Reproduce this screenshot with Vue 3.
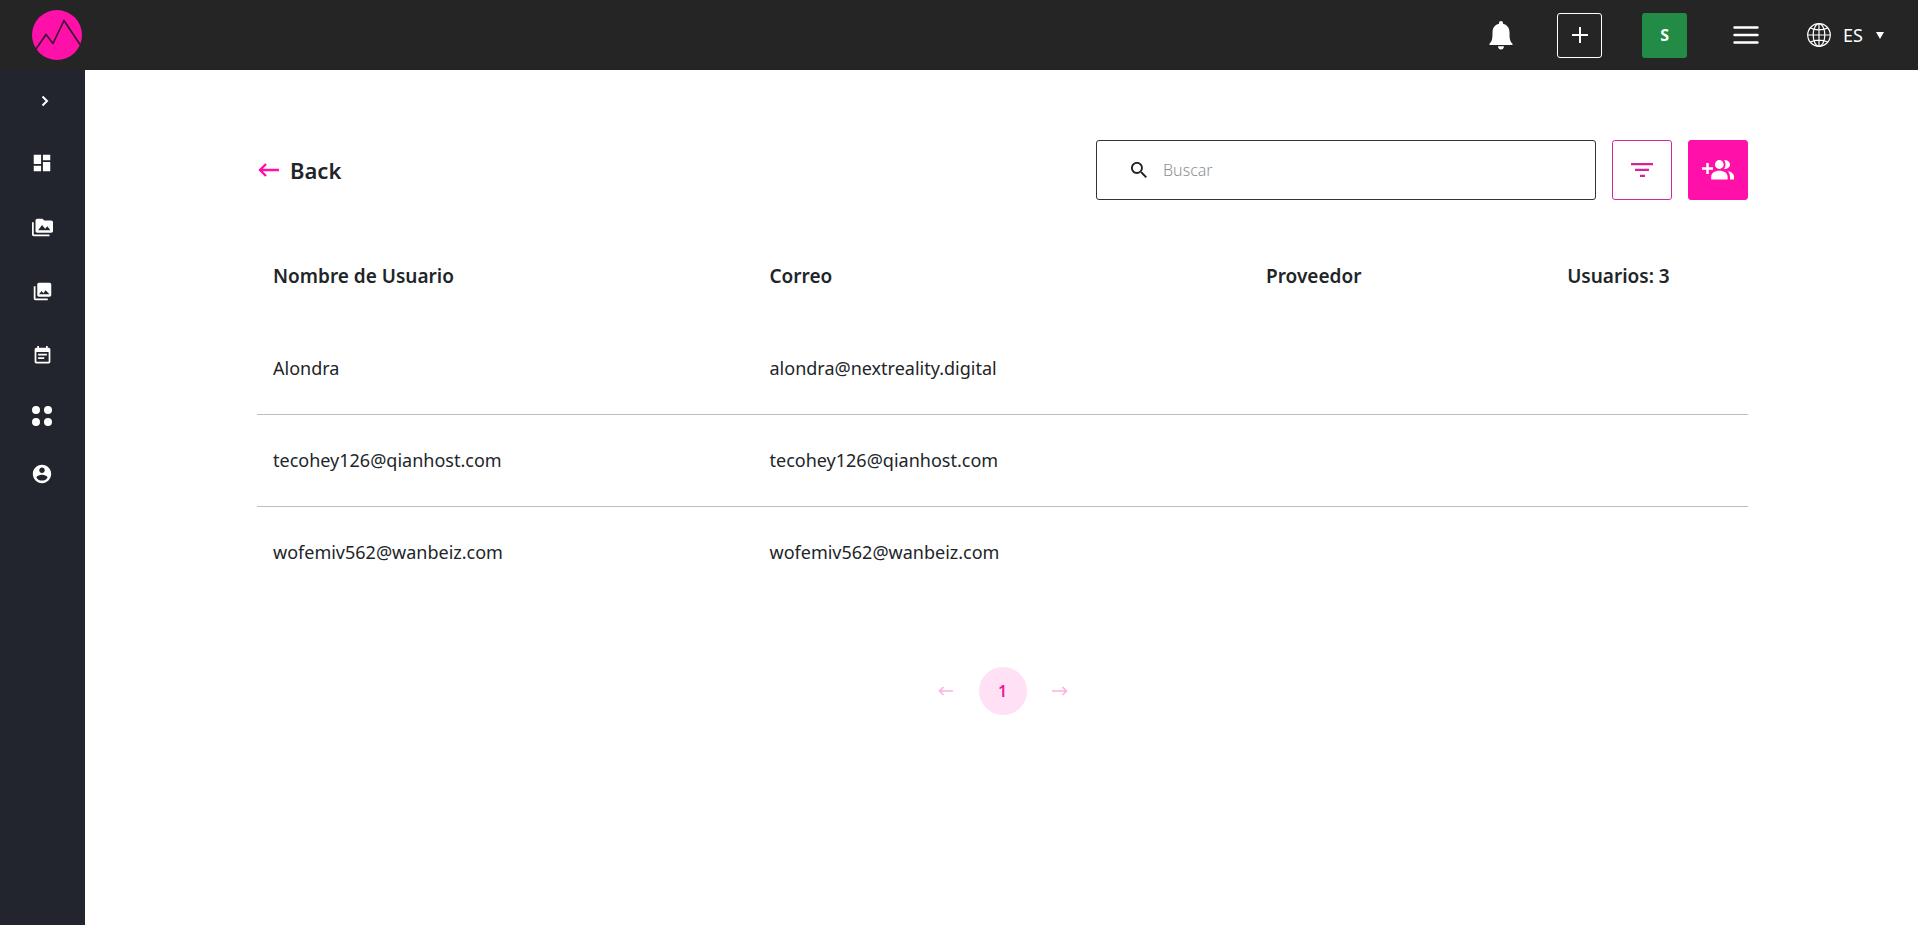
<script setup>
import { ref } from 'vue'

const search = ref('')
const users = [
  { name: 'Alondra', email: 'alondra@nextreality.digital' },
  { name: 'tecohey126@qianhost.com', email: 'tecohey126@qianhost.com' },
  { name: 'wofemiv562@wanbeiz.com', email: 'wofemiv562@wanbeiz.com' },
]
const navItems = [
  { label: 'Panel', size: 22, path: 'M3 13h8V3H3v10zm0 8h8v-6H3v6zm10 0h8V11h-8v10zm0-18v6h8V3h-8z' },
  { label: 'Proyectos', size: 21, path: 'M2 6H0v5h.01L0 20c0 1.100.9 2 2 2h18v-2H2V6zm20-2h-8l-2-2H6c-1.100 0-1.990.9-1.990 2L4 16c0 1.100.9 2 2 2h16c1.100 0 2-.9 2-2V6c0-1.100-.9-2-2-2zM7 15l4.500-6 3.500 4.510 2.500-3.010L21 15H7z' },
  { label: 'Galería', size: 21, path: 'M22 16V4c0-1.100-.9-2-2-2H8c-1.100 0-2 .9-2 2v12c0 1.100.9 2 2 2h12c1.100 0 2-.9 2-2zm-14-1l3-3.500 2 2.500 2.500-3.500L20 15H8zM2 6v14c0 1.100.9 2 2 2h14v-2H4V6H2z' },
  { label: 'Calendario', size: 21, path: 'M17 10H7v2h10v-2zm2-7h-1V1h-2v2H8V1H6v2H5c-1.110 0-1.990.9-1.990 2L3 19c0 1.100.89 2 2 2h14c1.100 0 2-.9 2-2V5c0-1.100-.9-2-2-2zm0 16H5V8h14v11zm-5-5H7v2h7v-2z' },
  { label: 'Aplicaciones', size: 24, compact: true, path: 'M6 2a4 4 0 1 0 0 8a4 4 0 1 0 0-8zM18 2a4 4 0 1 0 0 8a4 4 0 1 0 0-8zM6 14a4 4 0 1 0 0 8a4 4 0 1 0 0-8zM18 14a4 4 0 1 0 0 8a4 4 0 1 0 0-8z' },
  { label: 'Cuenta', size: 22, compact: true, path: 'M12 2C6.480 2 2 6.480 2 12s4.480 10 10 10 10-4.480 10-10S17.520 2 12 2zm0 3c1.660 0 3 1.340 3 3s-1.340 3-3 3-3-1.340-3-3 1.340-3 3-3zm0 14.200c-2.500 0-4.710-1.280-6-3.220.03-1.990 4-3.080 6-3.080 1.990 0 5.970 1.090 6 3.080-1.290 1.940-3.500 3.220-6 3.220z' },
]
</script>

<template>
  <div class="app">
    <header class="topbar">
      <a href="#" class="logo" aria-label="Inicio">
        <svg viewBox="0 0 50 50" width="50" height="50">
          <circle cx="25" cy="25" r="25" fill="#ff10a8" />
          <path d="M4 39L14 24.500L21 33.500L32 10.500L48 34.500" fill="none" stroke="#3a1431" stroke-width="1.700" stroke-linejoin="round" />
        </svg>
      </a>
      <div class="actions">
        <button class="plain bell" aria-label="Notificaciones">
          <svg viewBox="0 0 24 30" width="24" height="30" fill="#fff">
            <path d="M12 1c1.200 0 2 .8 2 2v.8c4 1 6.500 4 6.500 8.500 0 7 .5 9 3 11.500v1.200H.5v-1.200c2.500-2.500 3-4.500 3-11.500C3.500 7.800 6 4.800 10 3.800V3c0-1.200.8-2 2-2zM9 26.200h6c0 2-1.200 3.200-3 3.200s-3-1.200-3-3.200z" />
          </svg>
        </button>
        <button class="square add" aria-label="Añadir">
          <svg viewBox="0 0 16 16" width="16" height="16" stroke="#fff" stroke-width="2"><path d="M8 0v16M0 8h16" /></svg>
        </button>
        <button class="square avatar">S</button>
        <button class="plain menu" aria-label="Menú">
          <svg viewBox="0 0 26 20" width="26" height="20" stroke="#fff" stroke-width="2.400" stroke-linecap="round"><path d="M1.500 2.500h23M1.500 10h23M1.500 17.500h23" /></svg>
        </button>
        <button class="plain lang">
          <svg viewBox="0 0 24 24" width="24" height="24" fill="none" stroke="#fff" stroke-width="1.200" aria-hidden="true">
            <circle cx="12" cy="12" r="11.300" />
            <ellipse cx="12" cy="12" rx="5.800" ry="11.300" />
            <path d="M12 1v22M1 12h22M3.500 5c4.500 2.500 12.500 2.500 17 0M3.500 19c4.500-2.500 12.500-2.500 17 0" />
          </svg>
          <span>ES</span>
          <svg class="caret" viewBox="0 0 8 7" width="8" height="7" fill="#fff" aria-hidden="true"><path d="M0 0h8L4 7z" /></svg>
        </button>
      </div>
    </header>

    <div class="body">
      <nav class="sidebar">
        <button class="plain expand" aria-label="Expandir">
          <svg viewBox="0 0 8 12" width="8" height="12" fill="none" stroke="#fff" stroke-width="2"><path d="M1.500 1.500L6 6l-4.500 4.500" /></svg>
        </button>
        <a v-for="item in navItems" :key="item.label" href="#" class="nav-item" :class="{ compact: item.compact }" :aria-label="item.label">
          <svg viewBox="0 0 24 24" :width="item.size" :height="item.size" fill="#fff"><path :d="item.path" /></svg>
        </a>
      </nav>

      <main class="content">
        <div class="toolbar">
          <a href="#" class="back">
            <svg viewBox="0 0 21 14" width="21" height="14" fill="none" stroke="#ff10a8" stroke-width="2.400" aria-hidden="true"><path d="M21 7H2M8 1L2 7l6 6" /></svg>
            Back
          </a>
          <div class="tools">
            <label class="search">
              <svg viewBox="3 3 17.500 17.500" width="16" height="16" fill="#212121" aria-hidden="true"><path d="M15.500 14h-.79l-.28-.27C15.410 12.590 16 11.110 16 9.500 16 5.910 13.090 3 9.500 3S3 5.910 3 9.500 5.910 16 9.500 16c1.610 0 3.090-.59 4.230-1.570l.27.28v.79l5 4.990L20.490 19l-4.990-5zm-6 0C7.010 14 5 11.990 5 9.500S7.010 5 9.500 5 14 7.010 14 9.500 11.990 14 9.500 14z" /></svg>
              <input v-model="search" type="text" placeholder="Buscar" aria-label="Buscar" />
            </label>
            <button class="tool filter" aria-label="Filtrar">
              <svg viewBox="0 0 22 14" width="22" height="14" fill="#d6249b"><path d="M0 0h22v2.300H0zM4 5.800h14v2.300H4zM9 11.700h5V14H9z" /></svg>
            </button>
            <button class="tool invite" aria-label="Añadir usuario">
              <svg viewBox="0 0 32 20" width="32" height="20" fill="#fff">
                <path d="M4.300 3h2.500v4.300H11v2.500H6.800V14H4.300V9.800H0V7.300h4.300z" />
                <circle cx="17.300" cy="4.500" r="4.400" />
                <path d="M22 .3c3.200-.8 6 1.400 6 4.300s-2.800 5-6 4.200c2-2.600 2-5.900 0-8.500zM9.200 19.500v-2.700c0-3.800 3.600-6 8.200-6s8.200 2.200 8.200 6v2.700zM25.500 11.300c3.800.4 6.500 2.300 6.500 5.400v2.800h-4v-2.700c0-2.200-.8-4.200-2.500-5.500z" />
              </svg>
            </button>
          </div>
        </div>

        <table class="users">
          <thead>
            <tr>
              <th class="wide">Nombre de Usuario</th>
              <th class="wide">Correo</th>
              <th class="mid">Proveedor</th>
              <th>Usuarios: 3</th>
            </tr>
          </thead>
          <tbody>
            <tr v-for="u in users" :key="u.email">
              <td>{{ u.name }}</td>
              <td>{{ u.email }}</td>
              <td></td>
              <td></td>
            </tr>
          </tbody>
        </table>

        <nav class="pager" aria-label="Paginación">
          <button class="plain arrow" aria-label="Anterior" disabled>
            <svg viewBox="0 0 16 10" width="16" height="10" fill="none" stroke="#ffb0df" stroke-width="1.600"><path d="M15 5H1.500M5.500 1l-4 4 4 4" /></svg>
          </button>
          <button class="page" aria-current="page">1</button>
          <button class="plain arrow" aria-label="Siguiente" disabled>
            <svg viewBox="0 0 16 10" width="16" height="10" fill="none" stroke="#ffb0df" stroke-width="1.600"><path d="M0 5h14.500M10.500 1l4 4-4 4" /></svg>
          </button>
        </nav>
      </main>
    </div>
  </div>
</template>

<style>
body {
  margin: 0;
  background: #fff;
}
</style>

<style scoped>
.app {
  display: flex;
  flex-direction: column;
  min-height: 100vh;
  font-family: "Noto Sans", "Open Sans", sans-serif;
  color: #212529;
}
button,
input {
  font-family: inherit;
}
svg {
  display: block;
  flex: none;
}
a {
  color: inherit;
  text-decoration: none;
}
.plain {
  display: flex;
  align-items: center;
  justify-content: center;
  padding: 0;
  border: 0;
  background: none;
}
.topbar {
  display: flex;
  align-items: center;
  justify-content: space-between;
  height: 70px;
  padding: 0 34px 0 32px;
  background: #252525;
}
.actions {
  display: flex;
  align-items: center;
  gap: 40px;
}
.bell {
  margin-right: 4px;
}
.square {
  box-sizing: border-box;
  display: flex;
  align-items: center;
  justify-content: center;
  width: 45px;
  height: 45px;
  padding: 0;
  border: 1px solid #fff;
  border-radius: 3px;
  background: none;
  color: #fff;
}
.avatar {
  border: 0;
  background: #228b46;
  font-size: 16px;
  font-weight: 700;
}
.menu {
  margin: 0 8px 0 6px;
}
.lang {
  gap: 12px;
  color: #fff;
  font-size: 18px;
}
.caret {
  margin-left: 1px;
}
.body {
  display: flex;
  flex: 1;
}
.sidebar {
  box-sizing: border-box;
  flex: none;
  width: 85px;
  padding-right: 1px;
  background: #22252e;
}
.expand {
  width: 100%;
  height: 61px;
  padding-left: 6px;
}
.nav-item {
  display: flex;
  align-items: center;
  justify-content: center;
  height: 64px;
}
.nav-item.compact {
  height: 58px;
}
.content {
  flex: 1;
  min-width: 0;
  padding: 70px 170px 0 172px;
}
.toolbar {
  display: flex;
  align-items: center;
  justify-content: space-between;
}
.back {
  display: flex;
  align-items: center;
  gap: 11px;
  padding-left: 1px;
  font-size: 22px;
  font-weight: 600;
}
.tools {
  display: flex;
  gap: 16px;
}
.search {
  box-sizing: border-box;
  display: flex;
  align-items: center;
  gap: 16px;
  width: 500px;
  height: 60px;
  padding: 0 34px;
  border: 1px solid #333;
  border-radius: 3px;
}
.search input {
  flex: 1;
  min-width: 0;
  padding: 0;
  border: 0;
  outline: 0;
  background: none;
  color: #212529;
  font-size: 16px;
  font-weight: 300;
}
.search input::placeholder {
  color: #8d9196;
}
.tool {
  box-sizing: border-box;
  display: flex;
  align-items: center;
  justify-content: center;
  width: 60px;
  height: 60px;
  padding: 0;
  border: 1px solid #d6249b;
  border-radius: 3px;
  background: #fff;
}
.invite {
  border-color: #ff10a8;
  background: #ff10a8;
}
.users {
  width: 100%;
  margin-top: 30px;
  border-collapse: collapse;
  table-layout: fixed;
}
.users th,
.users td {
  box-sizing: border-box;
  height: 92px;
  padding: 0 16px;
  text-align: left;
  vertical-align: middle;
}
.users th {
  font-size: 19px;
  font-weight: 600;
}
.users td {
  font-size: 18px;
}
.users tbody tr + tr {
  border-top: 1px solid #bdbdbd;
}
.wide {
  width: 33.3%;
}
.mid {
  width: 20.2%;
}
.pager {
  display: flex;
  align-items: center;
  justify-content: center;
  gap: 25px;
  margin-top: 69px;
}
.page {
  width: 48px;
  height: 48px;
  padding: 0;
  border: 0;
  border-radius: 50%;
  background: #ffe0f4;
  color: #e91ba0;
  font-size: 16px;
  font-weight: 600;
}
</style>
